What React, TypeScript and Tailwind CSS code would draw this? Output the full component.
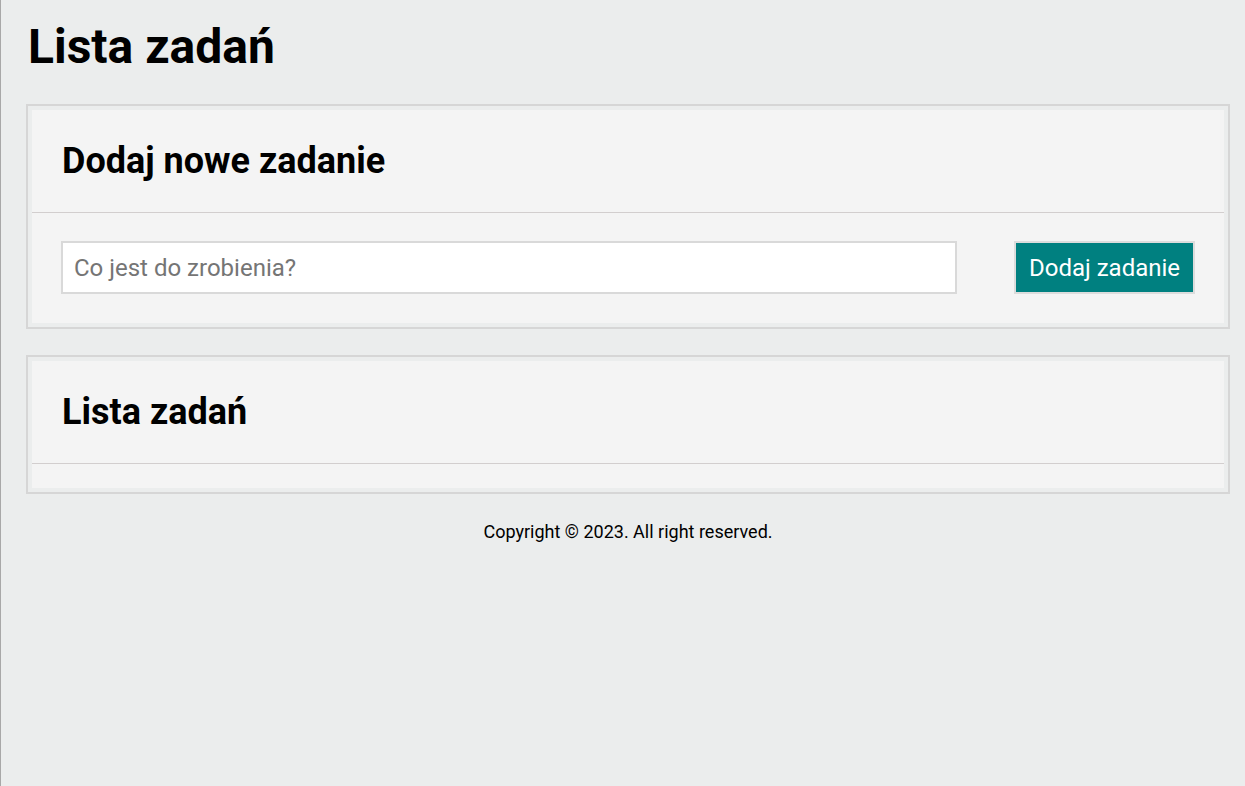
import { useState } from "react";

const Card = ({ title, children }: { title: string; children?: React.ReactNode }) => {
  return (
    <section className="border-2 border-[#d6d6d6] p-[4px] bg-[#ebeded]">
      <div className="bg-[#f4f4f4]">
        <div className="h-[103px] flex items-center px-[30px] border-b border-[#d2cece]">
          <h2 className="text-[36px] font-bold text-black leading-none">{title}</h2>
        </div>
        {children}
      </div>
    </section>
  );
};

export default function App() {
  const [task, setTask] = useState("");

  return (
    <div
      className="min-h-[786px] bg-[#ebeded] border-l border-[#a8a8a8] pl-[25px] pr-[15px] pt-[19px]"
      style={{ fontFamily: "Roboto, 'Liberation Sans', sans-serif" }}
    >
      <h1 className="text-[48px] font-bold text-black leading-[56px] ml-[2px] mb-[29px]">Lista zadań</h1>

      <Card title="Dodaj nowe zadanie">
        <form
          className="flex items-center justify-between pl-[29px] pr-[29px] pt-[28px] pb-[29px]"
          onSubmit={(e) => e.preventDefault()}
        >
          <input
            value={task}
            onChange={(e) => setTask(e.target.value)}
            placeholder="Co jest do zrobienia?"
            className="w-[896px] h-[53px] bg-white border-2 border-[#d9d9d9] px-[11px] text-[24px] text-black placeholder:text-[#757575] outline-none"
          />
          <button
            type="submit"
            className="w-[181px] h-[53px] bg-[#008080] border-2 border-[#dcdcdc] text-white text-[24px]"
          >
            Dodaj zadanie
          </button>
        </form>
      </Card>

      <div className="h-[26px]" />

      <Card title="Lista zadań">
        <div className="h-[24px]" />
      </Card>

      <p className="text-center text-[18px] text-black mt-[24px]">Copyright © 2023. All right reserved.</p>
    </div>
  );
}
